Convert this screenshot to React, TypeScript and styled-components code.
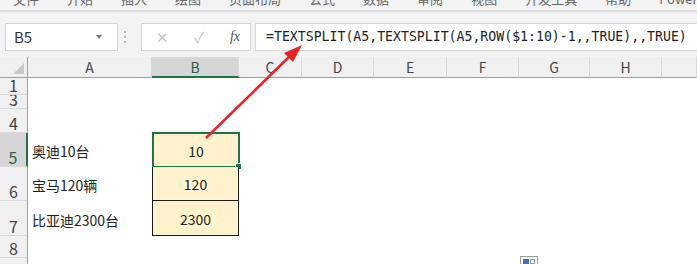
import React from 'react'
import styled, { createGlobalStyle, css } from 'styled-components'

const GlobalStyle = createGlobalStyle`
  html, body {
    margin: 0;
    padding: 0;
    width: 697px;
    height: 264px;
    overflow: hidden;
    background: #ffffff;
    font-family: "Noto Sans CJK SC", "Noto Sans", sans-serif;
  }
`

const Page = styled.div`
  position: relative;
  width: 697px;
  height: 264px;
  overflow: hidden;
`

const TabStrip = styled.div`
  display: flex;
  gap: 28px;
  height: 10px;
  padding-left: 13px;
  overflow: hidden;
  background: #f3f3f3;
`

const TabLabel = styled.span`
  font-size: 13px;
  line-height: 13px;
  margin-top: -8px;
  color: #666;
  white-space: nowrap;
`

const Shade = styled.div`
  height: 3px;
  background: linear-gradient(#d9d9d9, #ececec);
`

const FormulaBar = styled.div`
  display: flex;
  align-items: center;
  height: 44px;
  padding: 3px 0 0 5px;
  background: #f3f3f3;
  box-sizing: border-box;
`

const Box = styled.div`
  height: 28px;
  box-sizing: border-box;
  background: #ffffff;
  border: 1px solid #d6d6d6;
  display: flex;
  align-items: center;
`

const NameBox = styled(Box)`
  width: 113px;
  padding: 0 0 0 8px;
  justify-content: space-between;
  font-size: 15px;
  color: #333;
`

const Caret = styled.span`
  width: 0;
  height: 0;
  margin-right: 15px;
  border-left: 3.5px solid transparent;
  border-right: 3.5px solid transparent;
  border-top: 4px solid #7a7a7a;
`

const Grip = styled.div`
  display: flex;
  flex-direction: column;
  gap: 3px;
  margin: 0 15px 0 6px;
  span {
    width: 2px;
    height: 2px;
    background: #b5b5b5;
  }
`

const FuncBox = styled(Box)`
  width: 110px;
  padding: 0 10px 0 14px;
  justify-content: space-between;
  margin-right: 4px;
`

const FuncGlyph = styled.span<{ $dim?: boolean }>`
  font-size: ${({ $dim }) => ($dim ? '15px' : '14px')};
  color: ${({ $dim }) => ($dim ? '#c4c4c4' : '#555')};
  ${({ $dim }) =>
    !$dim &&
    css`
      font-family: "Liberation Serif", serif;
      font-style: italic;
    `}
`

const FormulaInput = styled(Box)`
  flex: 1;
  border-right: none;
  padding-left: 10px;
  font-family: "DejaVu Sans Mono", monospace;
  font-size: 13.2px;
  color: #222;
  white-space: nowrap;
  overflow: hidden;
`

const Sheet = styled.div`
  display: grid;
  grid-template-columns: 28px 124px 87px 63px 72px 73px 72px 71px 72px 1fr;
  grid-template-rows: 21px 17px 14px 24px 34px 34px 35px 22px 22px;
`

const Corner = styled.div`
  position: relative;
  background: #f0f0f0;
  border-right: 1px solid #9f9f9f;
  border-bottom: 1px solid #9f9f9f;
  &::after {
    content: '';
    position: absolute;
    right: 3px;
    bottom: 3px;
    border-left: 11px solid transparent;
    border-bottom: 11px solid #c9c9c9;
  }
`

const ColHead = styled.div<{ $selected?: boolean }>`
  display: flex;
  align-items: center;
  justify-content: center;
  box-sizing: border-box;
  background: ${({ $selected }) => ($selected ? '#d6d6d6' : '#f0f0f0')};
  border-right: 1px solid #d9d9d9;
  border-bottom: ${({ $selected }) => ($selected ? '2px solid #217346' : '1px solid #9f9f9f')};
  font-size: 14px;
  color: ${({ $selected }) => ($selected ? '#2f5f40' : '#444')};
`

const RowHead = styled.div<{ $selected?: boolean }>`
  display: flex;
  align-items: flex-end;
  justify-content: center;
  overflow: hidden;
  box-sizing: border-box;
  background: ${({ $selected }) => ($selected ? '#d6d6d6' : '#f0f0f0')};
  border-bottom: 1px solid #d9d9d9;
  border-right: ${({ $selected }) => ($selected ? '2px solid #217346' : '1px solid #9f9f9f')};
  font-size: 16px;
  line-height: 16px;
  padding-bottom: 1px;
  color: ${({ $selected }) => ($selected ? '#2f5f40' : '#444')};
`

const Cell = styled.div`
  display: flex;
  align-items: flex-end;
  padding: 0 0 7px 4px;
  font-size: 14px;
  line-height: 18px;
  color: #222;
  white-space: nowrap;
`

const ValueCell = styled.div<{ $active?: boolean }>`
  position: relative;
  display: flex;
  align-items: flex-end;
  justify-content: center;
  box-sizing: border-box;
  padding-bottom: 7px;
  background: #fff2cc;
  font-size: 14px;
  line-height: 18px;
  color: #222;
  ${({ $active }) =>
    $active
      ? css`
          border: 2px solid #217346;
          margin: -1px -1px -1px 0;
          padding-bottom: 6px;
        `
      : css`
          border: 1px solid #1a1a1a;
          border-top: none;
        `}
`

const FillHandle = styled.span`
  position: absolute;
  right: -4px;
  bottom: -4px;
  width: 5px;
  height: 5px;
  background: #217346;
  border: 1px solid #ffffff;
`

const Arrow = styled.svg`
  position: absolute;
  left: 0;
  top: 0;
  pointer-events: none;
`

const PasteTag = styled.div`
  position: absolute;
  left: 520px;
  top: 256px;
  width: 18px;
  height: 12px;
  box-sizing: border-box;
  border: 1px solid #9a9a9a;
  background: #ffffff;
  padding: 2px;
  display: flex;
  gap: 1px;
  span {
    width: 7px;
    height: 5px;
    background: #4a6db5;
  }
  span + span {
    width: 5px;
    background: #ffffff;
    border: 1px solid #8da0c8;
    box-sizing: border-box;
  }
`

const tabs = ['文件', '开始', '插入', '绘图', '页面布局', '公式', '数据', '审阅', '视图', '开发工具', '帮助', 'Power']
const columns = ['A', 'B', 'C', 'D', 'E', 'F', 'G', 'H', '']
const rows = [
  { n: '1' },
  { n: '3' },
  { n: '4' },
  { n: '5', label: '奥迪10台', value: '10', active: true },
  { n: '6', label: '宝马120辆', value: '120' },
  { n: '7', label: '比亚迪2300台', value: '2300' },
  { n: '8' },
  { n: '9' },
]

const emptyCols = 8

export default function App() {
  return (
    <Page>
      <GlobalStyle />
      <TabStrip>
        {tabs.map((t) => (
          <TabLabel key={t}>{t}</TabLabel>
        ))}
      </TabStrip>
      <Shade />
      <FormulaBar>
        <NameBox>
          B5
          <Caret />
        </NameBox>
        <Grip>
          <span />
          <span />
          <span />
        </Grip>
        <FuncBox>
          <FuncGlyph $dim>✕</FuncGlyph>
          <FuncGlyph $dim>✓</FuncGlyph>
          <FuncGlyph>fx</FuncGlyph>
        </FuncBox>
        <FormulaInput>=TEXTSPLIT(A5,TEXTSPLIT(A5,ROW($1:10)-1,,TRUE),,TRUE)</FormulaInput>
      </FormulaBar>
      <Sheet>
        <Corner />
        {columns.map((c, i) => (
          <ColHead key={i} $selected={c === 'B'}>
            {c}
          </ColHead>
        ))}
        {rows.map((r) => (
          <React.Fragment key={r.n}>
            <RowHead $selected={r.active}>{r.n}</RowHead>
            <Cell>{r.label}</Cell>
            {r.value ? (
              <ValueCell $active={r.active}>
                {r.value}
                {r.active && <FillHandle />}
              </ValueCell>
            ) : (
              <Cell />
            )}
            {Array.from({ length: emptyCols - 1 }).map((_, i) => (
              <Cell key={i} />
            ))}
          </React.Fragment>
        ))}
      </Sheet>
      <Arrow width="697" height="264" viewBox="0 0 697 264">
        <line x1="206" y1="138" x2="289" y2="57" stroke="#e2262b" strokeWidth="2.6" />
        <polygon points="302,45 293,62 284,53" fill="#e2262b" />
      </Arrow>
      <PasteTag>
        <span />
        <span />
      </PasteTag>
    </Page>
  )
}
